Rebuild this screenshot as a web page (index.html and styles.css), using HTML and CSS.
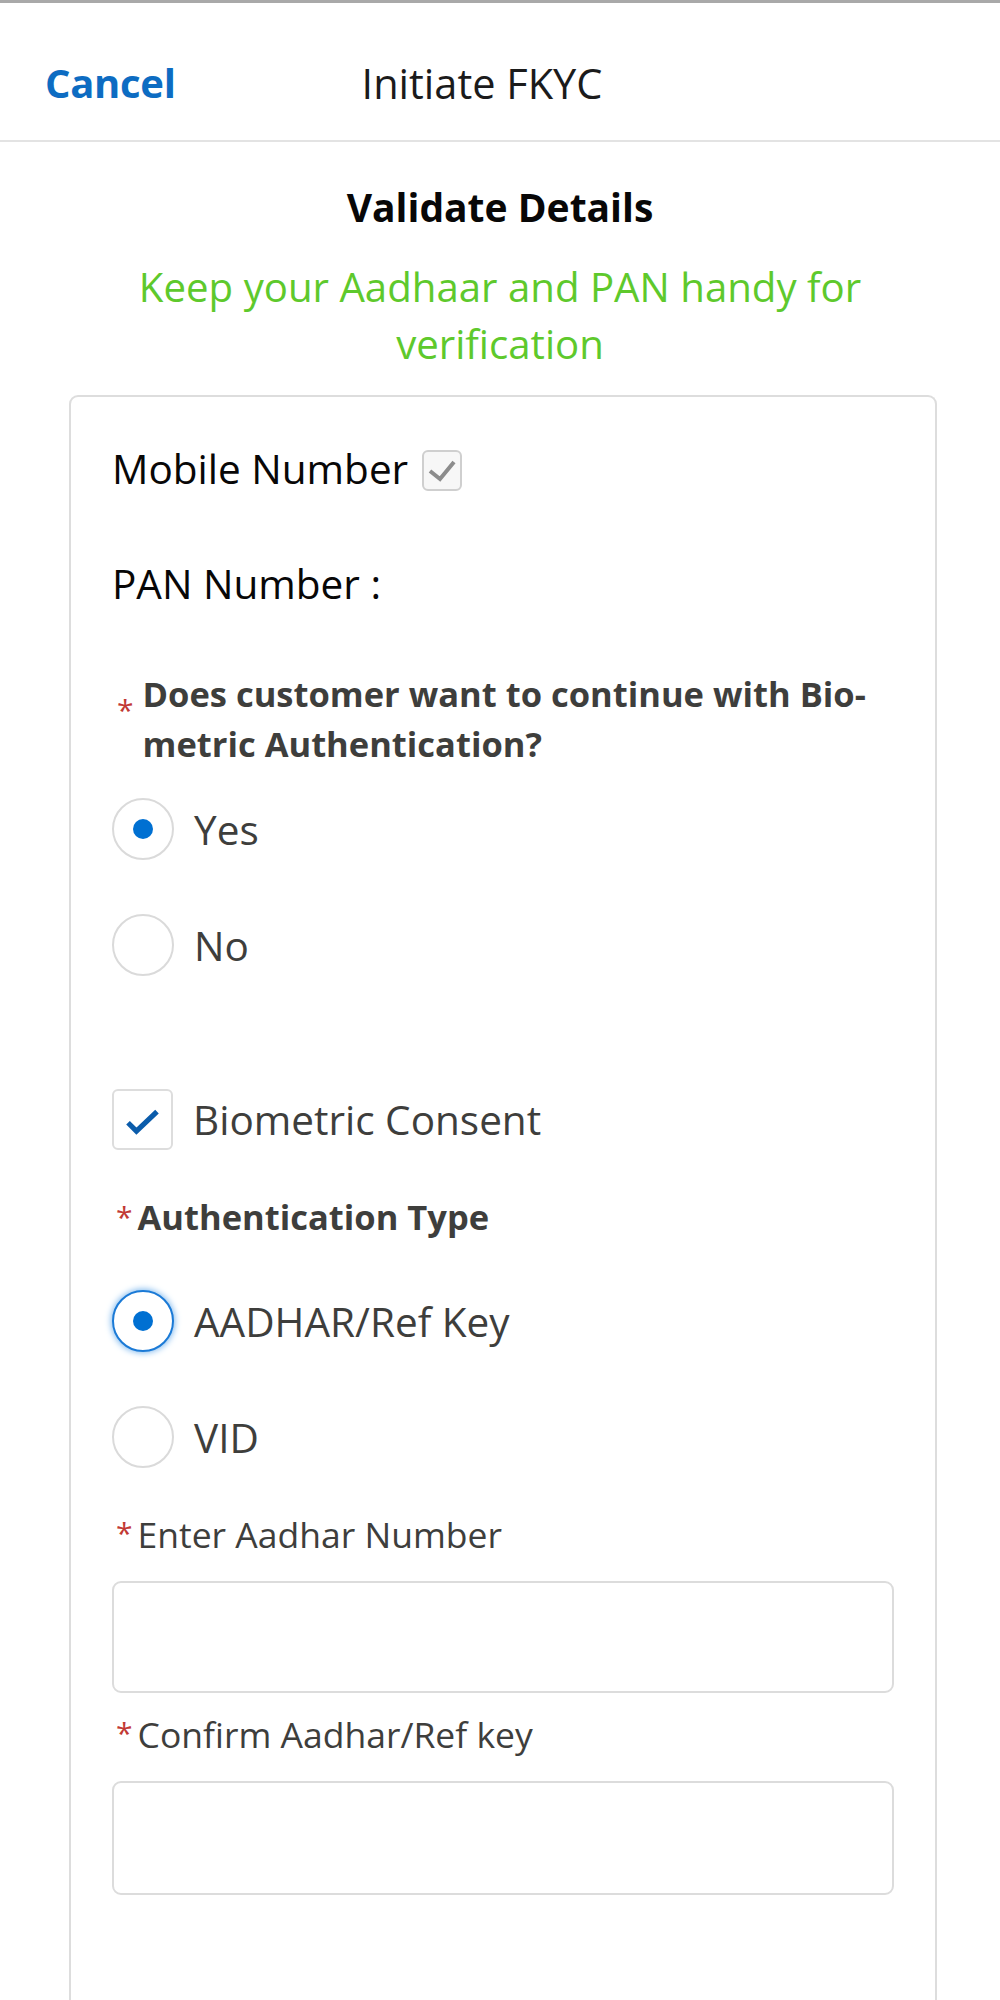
FILE: index.html
```html
<!DOCTYPE html>
<html lang="en">
<head>
<meta charset="utf-8">
<title>Initiate FKYC</title>
<link rel="stylesheet" href="styles.css">
</head>
<body>
<div class="topline"></div>
<header class="header">
  <span class="cancel">Cancel</span>
  <span class="title">Initiate FKYC</span>
</header>
<main>
  <h1 class="heading">Validate Details</h1>
  <p class="hint">Keep your Aadhaar and PAN handy for verification</p>
  <section class="card">
    <div class="row row-mobile">
      <span class="field-text">Mobile Number</span>
      <span class="mini-check">
        <svg viewBox="0 0 40 41" width="40" height="41"><polyline points="8,21 18,29 32,12" fill="none" stroke="#8c8c8c" stroke-width="4"/></svg>
      </span>
    </div>
    <div class="row row-pan"><span class="field-text">PAN Number :</span></div>

    <div class="question">
      <span class="req req-low">*</span>
      <span class="question-text">Does customer want to continue with Bio-<br>metric Authentication?</span>
    </div>

    <div class="options options-bio">
      <label class="option"><span class="radio checked"></span><span class="option-text">Yes</span></label>
      <label class="option"><span class="radio"></span><span class="option-text">No</span></label>
    </div>

    <label class="option consent">
      <span class="checkbox">
        <svg viewBox="0 0 61 61" width="57" height="57"><polyline points="15,34 24,43 46,22" fill="none" stroke="#0b5cab" stroke-width="5.5"/></svg>
      </span>
      <span class="option-text">Biometric Consent</span>
    </label>

    <div class="bold-label"><span class="req">*</span>Authentication Type</div>

    <div class="options options-auth">
      <label class="option"><span class="radio checked focused"></span><span class="option-text">AADHAR/Ref Key</span></label>
      <label class="option"><span class="radio"></span><span class="option-text">VID</span></label>
    </div>

    <div class="input-label label-first"><span class="req">*</span>Enter Aadhar Number</div>
    <div class="input input-first"></div>

    <div class="input-label label-second"><span class="req">*</span>Confirm Aadhar/Ref key</div>
    <div class="input input-second"></div>
  </section>
</main>
</body>
</html>
```
FILE: styles.css
```css
* { box-sizing: border-box; }
html, body { margin: 0; padding: 0; background: #ffffff; }
body {
  width: 1000px;
  font-family: "Open Sans", "Noto Sans", Arial, sans-serif;
  color: #080707;
}
.topline { height: 3px; background: #a9a9a9; }
.header {
  height: 139px;
  padding: 22px 0 0 45px;
  display: flex;
  align-items: center;
  border-bottom: 2px solid #e3e3e3;
}
.cancel {
  font-weight: 700;
  font-size: 40px;
  color: #0d6cc2;
  letter-spacing: -0.3px;
}
.title {
  margin-left: 186px;
  font-size: 41.5px;
  color: #1b1b1b;
}
main { padding: 0; }
.heading {
  margin: 37px 0 0;
  text-align: center;
  font-size: 39px;
  font-weight: 700;
  line-height: 56px;
  color: #080707;
}
.hint {
  margin: 23px auto 0;
  width: 780px;
  text-align: center;
  font-size: 40.2px;
  line-height: 57px;
  color: #5ec92c;
}
.card {
  margin: 23px 63px 0 69px;
  border: 2px solid #dddddd;
  border-bottom: none;
  border-radius: 9px 9px 0 0;
  padding: 41px 42px 200px 41px;
}
.row {
  display: flex;
  align-items: center;
  height: 60px;
}
.row-pan { margin-top: 55px; }
.field-text {
  font-size: 40.5px;
  color: #080707;
}
.mini-check {
  margin-left: 14px;
  margin-top: 4px;
  width: 40px;
  height: 41px;
  border: 2px solid #cfcfcf;
  border-radius: 6px;
  background: #f7f7f7;
  display: flex;
  align-items: center;
  justify-content: center;
}
.mini-check svg { display: block; margin: -2px; }
.question {
  margin-top: 56px;
  display: flex;
}
.req {
  color: #c23934;
  font-weight: 400;
  font-size: 30px;
  margin-right: 7px;
}
.req-low {
  margin-top: 26px;
  margin-left: 5px;
  margin-right: 9px;
  line-height: 30px;
}
.question-text {
  font-size: 34.5px;
  font-weight: 700;
  line-height: 50px;
  color: #3e3e3c;
}
.options {
  display: flex;
  flex-direction: column;
  gap: 54px;
}
.options-bio { margin-top: 29px; }
.options-auth { margin-top: 48px; }
.option {
  display: flex;
  align-items: center;
  height: 62px;
}
.radio {
  width: 62px;
  height: 62px;
  flex: none;
  border: 2px solid #dadada;
  border-radius: 50%;
  background: #ffffff;
  display: flex;
  align-items: center;
  justify-content: center;
}
.radio.checked::after {
  content: "";
  width: 20px;
  height: 20px;
  border-radius: 50%;
  background: #0070d2;
}
.radio.focused {
  border-color: #1b7ad6;
  box-shadow: 0 0 6px 1px #7fb9ee;
}
.option-text {
  margin-left: 20px;
  font-size: 40.5px;
  color: #3e3e3c;
}
.consent {
  margin-top: 113px;
  height: 61px;
}
.checkbox {
  width: 61px;
  height: 61px;
  flex: none;
  border: 2px solid #dddddd;
  border-radius: 6px;
  display: flex;
  align-items: center;
  justify-content: center;
}
.checkbox svg { display: block; }
.bold-label {
  margin-top: 42px;
  font-size: 34.5px;
  font-weight: 700;
  line-height: 50px;
  color: #3e3e3c;
}
.bold-label .req { margin-left: 4px; margin-right: 5px; vertical-align: 2px; }
.input-label {
  font-size: 35.5px;
  line-height: 50px;
  color: #3e3e3c;
}
.input-label .req { margin-left: 4px; margin-right: 5px; vertical-align: 4px; }
.label-first { margin-top: 40px; }
.label-second { margin-top: 15px; }
.input {
  width: 782px;
  border: 2px solid #dcdcdc;
  border-radius: 9px;
  background: #ffffff;
}
.input-first { margin-top: 22px; height: 112px; }
.input-second { margin-top: 22px; height: 114px; }
```
